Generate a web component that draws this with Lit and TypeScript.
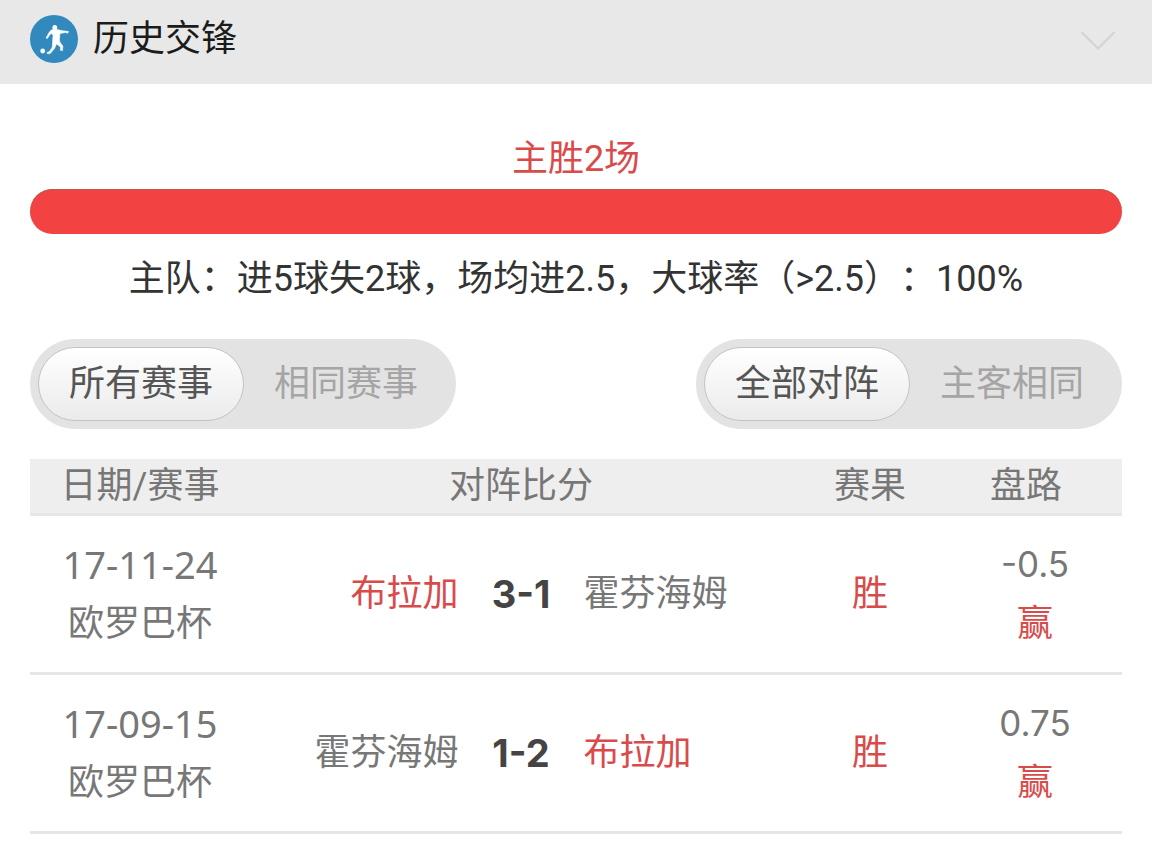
import { LitElement, html, css } from "lit";
import { customElement, property, state } from "lit/decorators.js";
import { classMap } from "lit/directives/class-map.js";

interface Match {
  date: string;
  cup: string;
  home: string;
  score: string;
  away: string;
  result: string;
  line: string;
  outcome: string;
}

const TEAM = "布拉加";

const MATCHES: Match[] = [
  { date: "17-11-24", cup: "欧罗巴杯", home: "布拉加", score: "3-1", away: "霍芬海姆", result: "胜", line: "-0.5", outcome: "赢" },
  { date: "17-09-15", cup: "欧罗巴杯", home: "霍芬海姆", score: "1-2", away: "布拉加", result: "胜", line: "0.75", outcome: "赢" },
];

@customElement("segmented-switch")
export class SegmentedSwitch extends LitElement {
  @property({ type: Array }) options: string[] = [];
  @property() label = "";
  @state() private selected = 0;

  static styles = css`
    :host {
      display: block;
    }
    .track {
      display: flex;
      padding: 8px;
      border-radius: 45px;
      background: #e3e3e3;
    }
    .option {
      padding: 0 30px;
      border: 0;
      border-radius: 37px;
      background: none;
      color: #a5a5a5;
      font: inherit;
      line-height: 74px;
      white-space: nowrap;
      cursor: pointer;
    }
    .option.on {
      border: 1px solid #c4c4c4;
      background: linear-gradient(#ffffff, #ebebeb);
      color: #555555;
      line-height: 72px;
    }
  `;

  render() {
    return html`
      <div class="track" role="group" aria-label=${this.label}>
        ${this.options.map(
          (name, i) => html`<button
            type="button"
            class=${classMap({ option: true, on: i === this.selected })}
            aria-pressed=${i === this.selected ? "true" : "false"}
            @click=${() => (this.selected = i)}
          >${name}</button>`
        )}
      </div>
    `;
  }
}

@customElement("app-root")
export class AppRoot extends LitElement {
  @state() private open = true;

  static styles = css`
    :host {
      display: block;
      min-height: 100vh;
      background: #ffffff;
      color: #777777;
      font-family: Roboto, "Noto Sans CJK SC", sans-serif;
      font-size: 36px;
      line-height: 60px;
      text-spacing-trim: space-all;
    }
    .head {
      display: flex;
      align-items: center;
      gap: 15px;
      padding: 15px 36px 21px 30px;
      background: #e8e8e8;
    }
    .badge {
      display: block;
      width: 48px;
      height: 48px;
    }
    .title {
      flex: 1;
      margin: 0;
      color: #1b1b1b;
      font-size: 36px;
      font-weight: 400;
      line-height: 48px;
    }
    .toggle {
      display: flex;
      padding: 0;
      border: 0;
      background: none;
      cursor: pointer;
    }
    .body {
      padding: 45px 30px 0;
    }
    .wins {
      margin: 0;
      color: #d94b4b;
      text-align: center;
    }
    .bar {
      height: 45px;
      border-radius: 23px;
      background: #f24242;
      box-shadow: inset 0 1px #b85a58;
    }
    .summary {
      margin: 15px 0 30px;
      color: #333333;
      text-align: center;
    }
    .filters {
      display: flex;
      justify-content: space-between;
      margin-bottom: 30px;
    }
    .matches {
      width: 100%;
      border-collapse: separate;
      border-spacing: 0;
      table-layout: fixed;
    }
    .c-date {
      width: 220px;
    }
    .c-result {
      width: 156px;
    }
    .c-line {
      width: 174px;
    }
    th,
    td {
      padding: 0;
      border-bottom: 3px solid #e6e6e6;
      font-weight: 400;
      text-align: center;
    }
    th {
      background: #eeeeee;
      line-height: 54px;
    }
    .line-head {
      padding-right: 18px;
    }
    td {
      padding: 18px 0;
    }
    .date {
      font-family: "Noto Sans", sans-serif;
      font-size: 38px;
    }
    .figure {
      font-family: Inter, sans-serif;
      font-size: 35px;
    }
    .versus {
      display: grid;
      grid-template-columns: 1fr 125px 1fr;
    }
    .home {
      text-align: right;
    }
    .away {
      text-align: left;
    }
    .score {
      color: #444444;
      font-family: Inter, sans-serif;
      font-size: 38px;
      font-weight: 700;
    }
    .red {
      color: #d94b4b;
    }
  `;

  private team(name: string, side: string) {
    return html`<span class=${classMap({ [side]: true, red: name === TEAM })}>${name}</span>`;
  }

  private row(m: Match) {
    return html`
      <tr>
        <td><div class="date">${m.date}</div><div>${m.cup}</div></td>
        <td>
          <div class="versus">
            ${this.team(m.home, "home")}<span class="score">${m.score}</span>${this.team(m.away, "away")}
          </div>
        </td>
        <td class="red">${m.result}</td>
        <td><div class="figure">${m.line}</div><div class="red">${m.outcome}</div></td>
      </tr>
    `;
  }

  render() {
    return html`
      <header class="head">
        <svg class="badge" viewBox="0 0 48 48" aria-hidden="true">
          <circle cx="24" cy="24" r="24" fill="#3289be" />
          <ellipse cx="24.800" cy="12.600" rx="2.400" ry="2.700" fill="#fff" />
          <circle cx="12.700" cy="36" r="2.400" fill="#fff" />
          <path
            fill="#fff"
            stroke="#fff"
            stroke-width=".5"
            stroke-linejoin="round"
            d="M21.500 14.800 27.500 14.500 31 15.400 38.600 16.500 37.800 18.200 35.500 17.600 30 18.500 29.500 24.500 29.800 27 32.900 31 32.500 35.800 30.300 35.200 30.500 32 26.500 29 24.500 33.600 20 38.800 17.200 38.600 17 37.500 19.500 36.600 22.300 32 22.600 26 23 20.500 21.700 18.400 20 19.600 17.300 23.600 16 23 19 17.600Z"
          />
        </svg>
        <h1 class="title">历史交锋</h1>
        <button
          class="toggle"
          type="button"
          aria-label="历史交锋"
          aria-expanded=${this.open ? "true" : "false"}
          @click=${() => (this.open = !this.open)}
        >
          <svg width="36" height="24" viewBox="0 0 36 24" aria-hidden="true">
            <path d="M1.500 5 18 21.500 34.500 5" fill="none" stroke="#d3d3d3" stroke-width="2" />
          </svg>
        </button>
      </header>
      ${this.open
        ? html`<main class="body">
            <p class="wins">主胜2场</p>
            <div class="bar"></div>
            <p class="summary">主队：进5球失2球，场均进2.5，大球率（>2.5）：100%</p>
            <div class="filters">
              <segmented-switch label="赛事" .options=${["所有赛事", "相同赛事"]}></segmented-switch>
              <segmented-switch label="对阵" .options=${["全部对阵", "主客相同"]}></segmented-switch>
            </div>
            <table class="matches">
              <colgroup>
                <col class="c-date" />
                <col />
                <col class="c-result" />
                <col class="c-line" />
              </colgroup>
              <thead>
                <tr>
                  <th scope="col">日期/赛事</th>
                  <th scope="col">对阵比分</th>
                  <th scope="col">赛果</th>
                  <th scope="col" class="line-head">盘路</th>
                </tr>
              </thead>
              <tbody>
                ${MATCHES.map((m) => this.row(m))}
              </tbody>
            </table>
          </main>`
        : null}
    `;
  }
}
